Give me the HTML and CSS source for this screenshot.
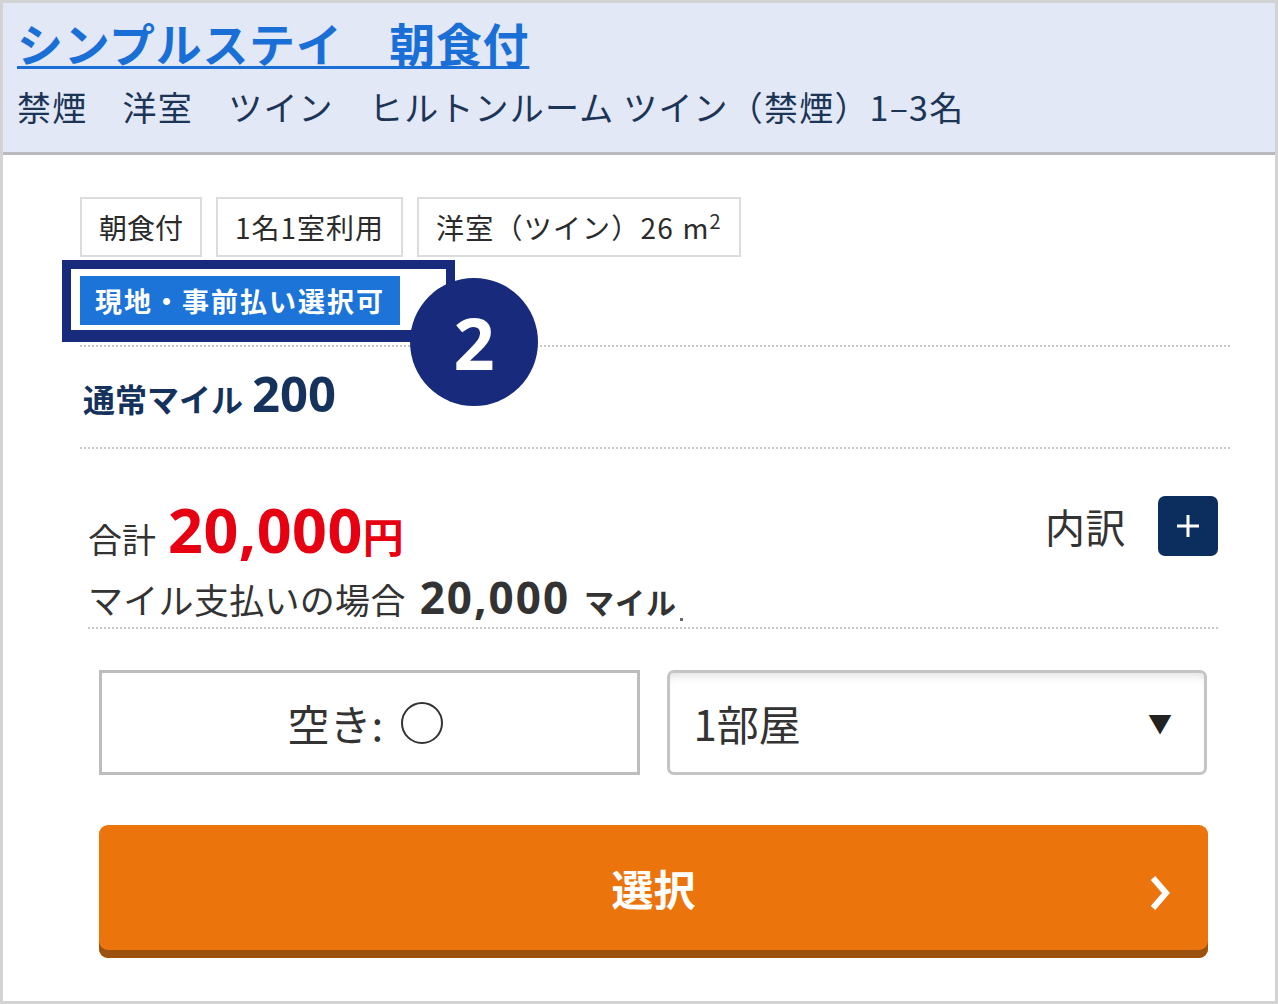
FILE: index.html
```html
<!DOCTYPE html>
<html lang="ja">
<head>
<meta charset="utf-8">
<link rel="stylesheet" href="styles.css">
</head>
<body>
<div class="frame">
  <header class="head">
    <a class="title" href="#">シンプルステイ　朝食付</a>
    <p class="sub">禁煙　洋室　ツイン　ヒルトンルーム ツイン（禁煙）1–3名</p>
  </header>
  <main class="content">
    <div class="tags">
      <span class="tag">朝食付</span>
      <span class="tag">1名1室利用</span>
      <span class="tag">洋室（ツイン）26 m<sup>2</sup></span>
    </div>
    <div class="pay-row">
      <span class="pay-tag">現地・事前払い選択可</span>
      <span class="mark-frame"></span>
      <span class="mark-num">2</span>
    </div>
    <div class="miles">
      <span class="miles-label">通常マイル</span><span class="miles-num">200</span>
    </div>
    <div class="total">
      <div class="total-main">
        <div class="sum"><span class="sum-label">合計</span><span class="sum-num">20,000</span><span class="sum-yen">円</span></div>
        <div class="milepay"><span class="mp-label">マイル支払いの場合</span><span class="mp-num">20,000</span><span class="mp-unit">マイル</span></div>
      </div>
      <div class="breakdown">
        <span class="bd-label">内訳</span>
        <span class="bd-btn"><svg width="26" height="26" viewBox="0 0 26 26"><path d="M13 2v22M2 13h22" stroke="#fff" stroke-width="3" fill="none"/></svg></span>
      </div>
      <span class="speck"></span>
    </div>
    <div class="controls">
      <div class="avail">空き:<span class="circle"></span></div>
      <div class="select"><span>1部屋</span><span class="arrow">▼</span></div>
    </div>
    <button class="choose"><span>選択</span><svg class="chev" width="24" height="36" viewBox="0 0 24 36"><path d="M5 3l13 15-13 15" stroke="#fff" stroke-width="6" fill="none"/></svg></button>
  </main>
</div>
</body>
</html>
```
FILE: styles.css
```css
* { box-sizing: border-box; }
html, body { margin: 0; padding: 0; background: #fff; }
body { font-family: "Noto Sans CJK JP", "Noto Sans", sans-serif; }
.frame {
  width: 1278px;
  height: 1004px;
  border: 3px solid #d3d3d3;
  overflow: hidden;
  position: relative;
}
.head {
  background: #e2e8f6;
  height: 152px;
  border-bottom: 3px solid #b9b9bd;
  padding: 11px 14px 0;
}
.title {
  display: inline-block;
  color: #1a6fd6;
  font-size: 46px;
  font-weight: 700;
  line-height: 56px;
  text-decoration: underline;
  text-decoration-thickness: 3px;
  text-underline-offset: 4px;
  letter-spacing: 0.7px;
}
.sub {
  margin: 15px 0 0;
  color: #1c3557;
  font-size: 34px;
  line-height: 44px;
  letter-spacing: 1.2px;
}
.content {
  padding: 42px 45px 0 77px;
}
.tags { display: flex; gap: 14px; }
.tag {
  height: 60px;
  border: 2px solid #dcdcdc;
  padding: 0 17px;
  font-size: 28px;
  line-height: 56px;
  color: #2b2b2b;
  letter-spacing: 1px;
}
.tag:first-child { letter-spacing: 0; }
.tag:last-child { letter-spacing: 1.2px; word-spacing: 1px; }
.tag sup { font-size: 20px; vertical-align: 10px; line-height: 0; }
.pay-row {
  position: relative;
  margin-top: 19px;
  height: 71px;
  border-bottom: 2px dotted #c9c9c9;
}
.pay-tag {
  display: inline-block;
  height: 49px;
  background: #1c74d9;
  color: #fff;
  font-weight: 700;
  font-size: 27px;
  line-height: 49px;
  padding: 0 15px;
  letter-spacing: 2px;
}
.mark-frame {
  position: absolute;
  left: -18px;
  top: -16px;
  width: 393px;
  height: 82px;
  border: 9px solid #172a7b;
  border-bottom-width: 12px;
}
.mark-num {
  position: absolute;
  left: 330px;
  top: 2px;
  width: 128px;
  height: 128px;
  border-radius: 50%;
  background: #172a7b;
  color: #fff;
  font-family: "Noto Sans", sans-serif;
  font-weight: 700;
  font-size: 72px;
  line-height: 128px;
  text-align: center;
  z-index: 2;
}
.miles {
  height: 102px;
  border-bottom: 2px dotted #c9c9c9;
  color: #15325d;
  font-weight: 700;
  padding: 18px 0 0 3px;
  line-height: 56px;
}
.miles-label { font-size: 32px; }
.miles-num { font-family: "Noto Sans", sans-serif; font-size: 49px; margin-left: 9px; }
.total {
  position: relative;
  display: flex;
  justify-content: space-between;
  height: 180px;
  border-bottom: 2px dotted #c9c9c9;
  margin: 0 12px 0 8px;
  padding-top: 45px;
}
.sum { color: #333; line-height: 72px; height: 72px; }
.sum-label { font-size: 34px; }
.sum-num { font-family: "Noto Sans", sans-serif; font-weight: 700; font-size: 61px; color: #e60012; margin-left: 12px; letter-spacing: 0.5px; }
.sum-yen { font-weight: 700; font-size: 41px; color: #e60012; }
.milepay { color: #333; line-height: 56px; margin-top: 3px; }
.mp-label { font-size: 35px; letter-spacing: 0.3px; }
.mp-num { font-family: "Noto Sans", sans-serif; font-weight: 700; font-size: 44px; margin-left: 14px; letter-spacing: 2px; }
.mp-unit { font-weight: 700; font-size: 30px; margin-left: 14px; letter-spacing: 1px; }
.speck { position: absolute; left: 592px; bottom: 6px; width: 3px; height: 3px; background: #666; }
.breakdown { display: flex; align-items: flex-start; gap: 32px; padding-top: 2px; }
.bd-label { font-size: 40px; color: #333; line-height: 60px; letter-spacing: 0.5px; }
.bd-btn {
  width: 60px;
  height: 60px;
  border-radius: 7px;
  background: #0c2e5f;
  display: flex;
  align-items: center;
  justify-content: center;
}
.controls {
  display: grid;
  grid-template-columns: minmax(0, 1fr) minmax(0, 1fr);
  gap: 27px;
  margin: 41px 23px 0 19px;
}
.avail, .select {
  height: 105px;
  font-size: 42px;
  color: #333;
  display: flex;
  align-items: center;
}
.avail {
  border: 3px solid #bdbdbd;
  justify-content: center;
  padding-right: 8px;
}
.circle {
  display: inline-block;
  width: 42px;
  height: 42px;
  border: 2px solid #333;
  border-radius: 50%;
  margin-left: 18px;
}
.select {
  border: 3px solid #c4c4c4;
  border-radius: 7px;
  background: #fff;
  box-shadow: inset 0 8px 8px -5px rgba(0,0,0,0.12);
  justify-content: space-between;
  padding: 0 32px 0 24px;
}
.arrow { font-size: 24px; color: #222; }
.choose {
  display: flex;
  align-items: center;
  justify-content: center;
  position: relative;
  width: 1109px;
  height: 133px;
  margin: 50px 0 0 19px;
  border: 0;
  border-radius: 9px;
  background: #eb750c;
  box-shadow: inset 0 -8px 0 #9b520f;
  color: #fff;
  font-family: "Noto Sans CJK JP", sans-serif;
  font-weight: 700;
  font-size: 42px;
  padding: 0 0 8px;
}
.chev { position: absolute; right: 36px; top: 50px; }
```
